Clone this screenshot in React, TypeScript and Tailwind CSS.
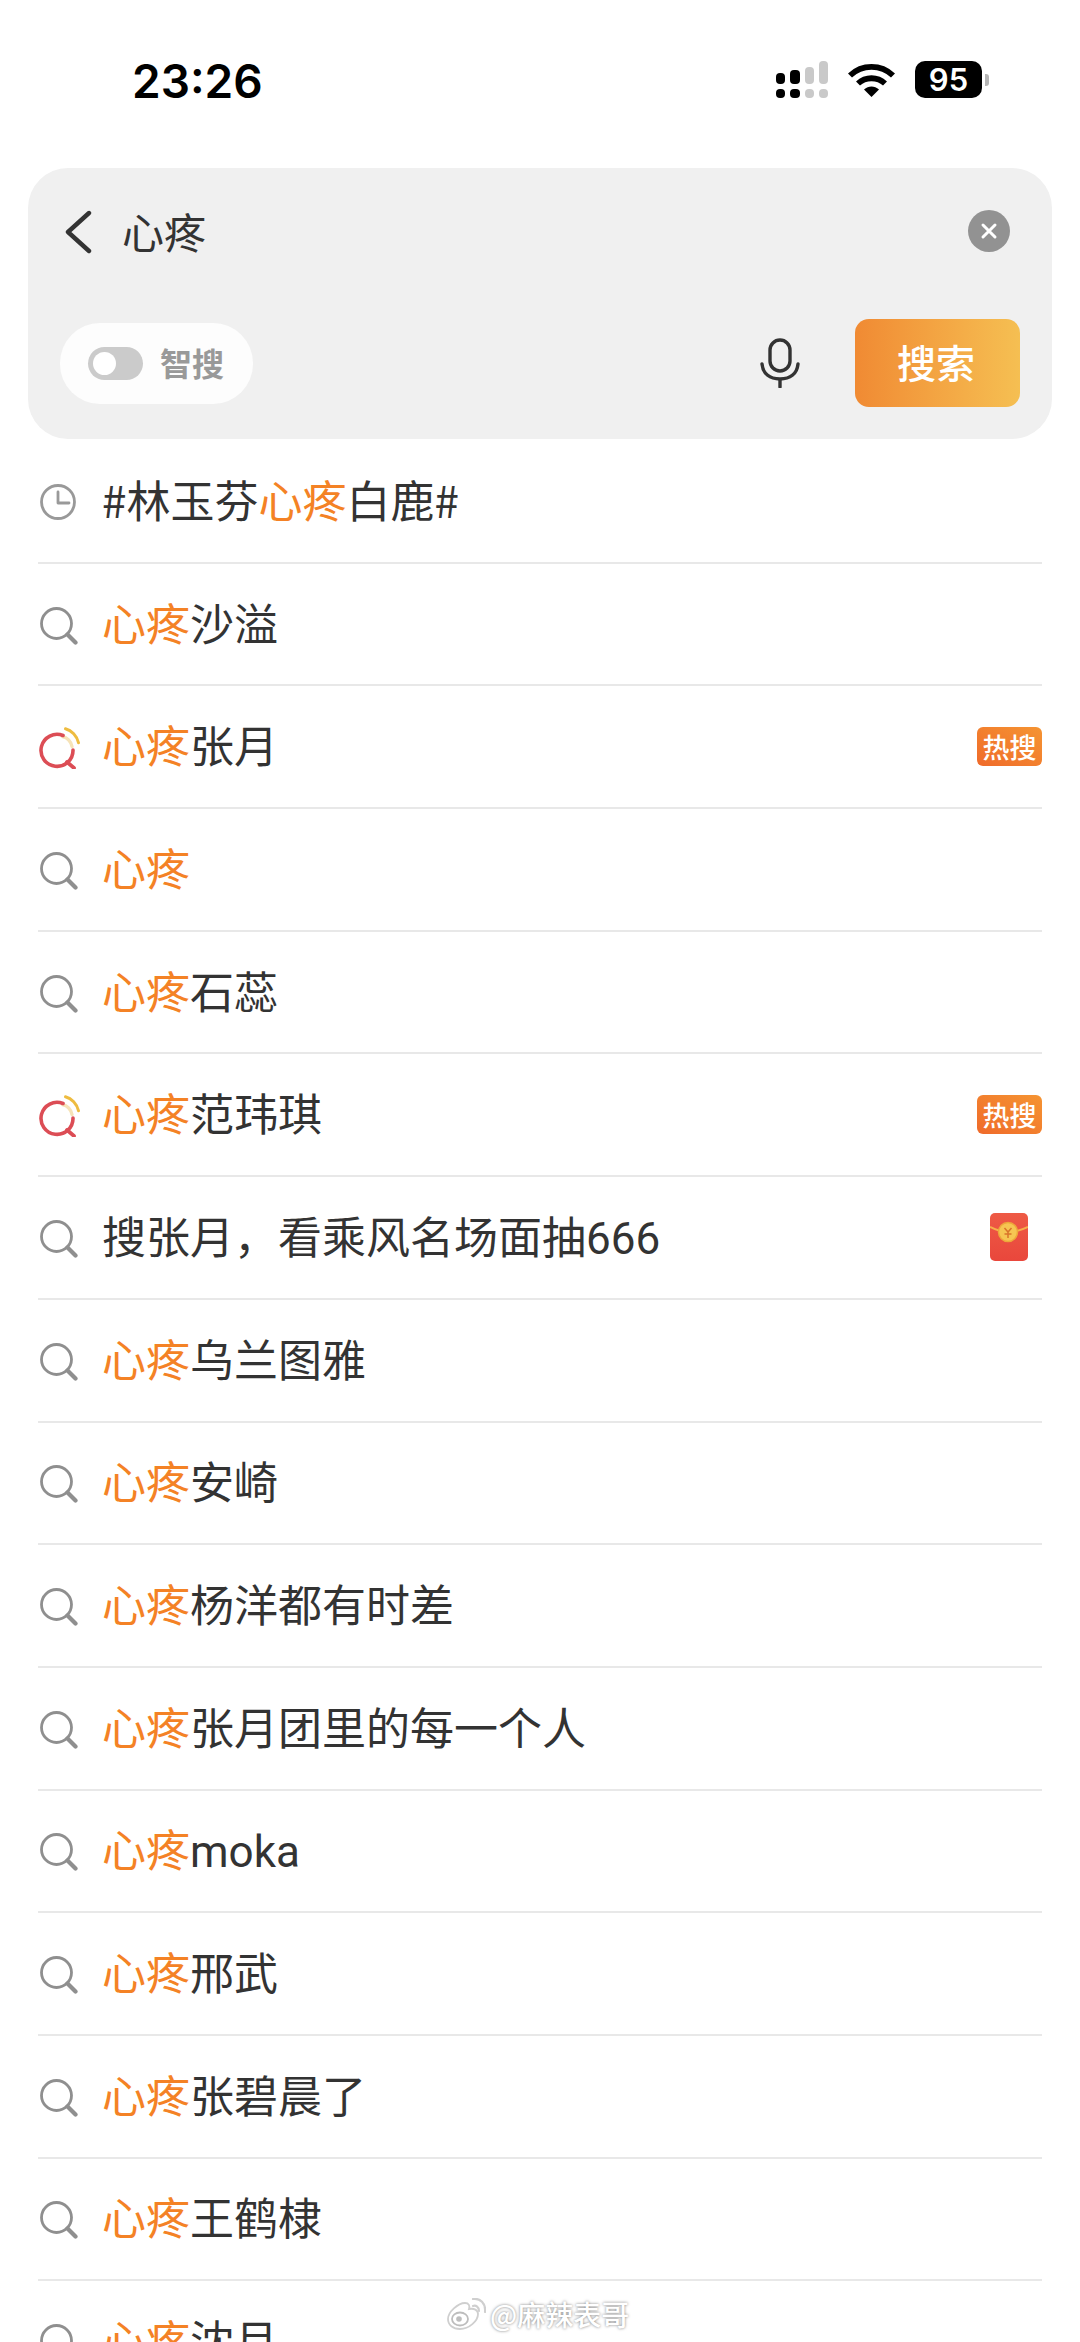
const ROBOTO = "font-['Roboto','Noto_Sans_CJK_SC','Noto_Sans',sans-serif]"
const NOTO = "font-['Noto_Sans_CJK_SC','Noto_Sans',sans-serif]"

type Row = { pre?: string; hit?: string; post: string; icon?: 'search' | 'clock' | 'hot'; tag?: 'hot' | 'packet' }

const rows: Row[] = [
  { pre: '#林玉芬', hit: '心疼', post: '白鹿#', icon: 'clock' },
  { hit: '心疼', post: '沙溢' },
  { hit: '心疼', post: '张月', icon: 'hot', tag: 'hot' },
  { hit: '心疼', post: '' },
  { hit: '心疼', post: '石蕊' },
  { hit: '心疼', post: '范玮琪', icon: 'hot', tag: 'hot' },
  { post: '搜张月，看乘风名场面抽666', tag: 'packet' },
  { hit: '心疼', post: '乌兰图雅' },
  { hit: '心疼', post: '安崎' },
  { hit: '心疼', post: '杨洋都有时差' },
  { hit: '心疼', post: '张月团里的每一个人' },
  { hit: '心疼', post: 'moka' },
  { hit: '心疼', post: '邢武' },
  { hit: '心疼', post: '张碧晨了' },
  { hit: '心疼', post: '王鹤棣' },
  { hit: '心疼', post: '沈月' },
]

function SearchIcon() {
  return (
    <svg width="38" height="38" viewBox="0 0 38 38" fill="none" stroke="#8f8f8f">
      <circle cx="16.5" cy="16.5" r="15" strokeWidth="2.8" />
      <path d="M27.5 27.5l8 8" strokeWidth="4.2" strokeLinecap="round" />
    </svg>
  )
}

function ClockIcon() {
  return (
    <svg width="38" height="38" viewBox="0 0 38 38" fill="none" stroke="#999999" strokeWidth="2.8">
      <circle cx="18" cy="18" r="16.5" />
      <path d="M18 8v11h11" strokeLinecap="round" strokeLinejoin="round" />
    </svg>
  )
}

function HotIcon() {
  return (
    <svg width="42" height="42" viewBox="0 0 42 42" fill="none">
      <path d="M23.5 9.5c4.5 1 8.5 5 9.5 10" stroke="#f6e3b8" strokeWidth="3.4" strokeLinecap="round" />
      <path d="M24 8.500A16 16 0 1 0 34 23" stroke="#dc4d55" strokeWidth="3.6" strokeLinecap="round" />
      <path d="M28 35l7 6" stroke="#dc4d55" strokeWidth="3.8" strokeLinecap="round" />
      <path d="M26.5 1.8c6 1.5 11.5 7 13 14" stroke="#eebc40" strokeWidth="3" strokeLinecap="round" />
    </svg>
  )
}

function RedPacket() {
  return (
    <svg width="38" height="48" viewBox="0 0 38 48">
      <defs>
        <linearGradient id="packet" x1="0" y1="0" x2="0" y2="1">
          <stop offset="0" stopColor="#ee5a45" />
          <stop offset="1" stopColor="#e9473c" />
        </linearGradient>
      </defs>
      <rect x="0" y="0" width="38" height="48" rx="5" fill="url(#packet)" />
      <path d="M0 14c6 3 11 5 18 5s14-2 20-5" fill="none" stroke="#f5b04a" strokeWidth="2" />
      <circle cx="18" cy="19" r="9.5" fill="#f6c552" stroke="#eda83a" strokeWidth="1.5" />
      <path d="M14.5 15l3.5 4 3.5-4M18 19v6M14.5 21h7" fill="none" stroke="#d9742a" strokeWidth="1.5" />
    </svg>
  )
}

function HotTag() {
  return (
    <span className={`${NOTO} flex h-[39px] w-[65px] items-center justify-center rounded-[6px] bg-gradient-to-tr from-[#ef6a2a] to-[#f59432] text-[27px] font-medium leading-none text-white`}>
      热搜
    </span>
  )
}

function Signal() {
  return (
    <div className="grid grid-cols-[9px_10px_9px_9px] items-end gap-x-[5px] gap-y-[5px]">
      <span className="h-[11px] rounded-[4px] bg-black" />
      <span className="h-[14px] rounded-[4px] bg-black" />
      <span className="h-[17px] rounded-[4px] bg-[#c9c9c9]" />
      <span className="h-[23px] rounded-[4px] bg-[#c9c9c9]" />
      <span className="h-[9px] rounded-[4px] bg-black" />
      <span className="h-[9px] rounded-[4px] bg-black" />
      <span className="h-[9px] rounded-[4px] bg-[#c9c9c9]" />
      <span className="h-[9px] rounded-[4px] bg-[#c9c9c9]" />
    </div>
  )
}

function Wifi() {
  return (
    <svg width="47" height="34" viewBox="0 0 47 34" fill="none" stroke="#000">
      <path d="M2 12.5C14 1 33 1 45 12.5" strokeWidth="5.8" />
      <path d="M10 20.5C17.5 13.5 29.5 13.5 37 20.5" strokeWidth="5.8" />
      <path d="M16 26.5L23.5 34L31 26.5C26.5 22.5 20.5 22.5 16 26.5Z" fill="#000" stroke="none" />
    </svg>
  )
}

function Battery() {
  return (
    <div className="flex items-center">
      <div className="flex h-[37px] w-[67px] items-center justify-center rounded-[10px] bg-black font-['Inter',sans-serif] text-[31px] font-semibold leading-none text-white">
        95
      </div>
      <span className="ml-[3px] h-[12px] w-[4px] rounded-r-[3px] bg-[#b5b5b5]" />
    </div>
  )
}

function WeiboLogo() {
  return (
    <svg width="40" height="32" viewBox="0 0 40 32" fill="none">
      <path d="M2 21C2 14 12 5 19 5c4 0 5 3 4 6 5-1 9 1 9 5 0 7-9 15-18 15C7 31 2 27 2 21Z" fill="#fff" stroke="#cfcfcf" strokeWidth="1.8" />
      <ellipse cx="14" cy="21" rx="8" ry="6.5" stroke="#bdbdbd" strokeWidth="1.8" />
      <circle cx="13" cy="21" r="2.8" fill="#bdbdbd" />
      <path d="M27 8c3-1 6 1 6 5M27 1c7-1 13 4 12 13" stroke="#cfcfcf" strokeWidth="2.2" strokeLinecap="round" />
    </svg>
  )
}

export default function App() {
  return (
    <div className={`${NOTO} relative h-[2342px] w-[1080px] overflow-hidden bg-white`}>
      {/* status bar */}
      <div className="flex h-[168px] items-start justify-between pl-[132px] pr-[91px] pt-[54px]">
        <span className="font-['Inter',sans-serif] text-[46px] font-semibold leading-[54px] text-black">23:26</span>
        <div className="flex items-center gap-[20px] pt-[7px]">
          <Signal />
          <Wifi />
          <Battery />
        </div>
      </div>

      {/* search card */}
      <div className="mx-[28px] flex h-[271px] flex-col rounded-[40px] bg-[#f0f0f0]">
        <div className="flex items-center pl-[36px] pr-[42px] pt-[42px]">
          <svg width="28" height="44" viewBox="0 0 28 44" fill="none" stroke="#333" strokeWidth="4.4" strokeLinecap="round" strokeLinejoin="round">
            <path d="M25 3L4 22l21 19" />
          </svg>
          <span className="ml-[30px] -mt-[3px] text-[42px] leading-[44px] text-[#333]">心疼</span>
          <span className="ml-auto -mt-[2px] flex h-[42px] w-[42px] items-center justify-center rounded-full bg-[#929292]">
            <svg width="18" height="18" viewBox="0 0 18 18" stroke="#fff" strokeWidth="3" strokeLinecap="round">
              <path d="M3 3l12 12M15 3L3 15" />
            </svg>
          </span>
        </div>
        <div className="mt-auto flex items-center pb-[32px] pl-[32px] pr-[32px]">
          <div className="flex h-[81px] w-[193px] items-center rounded-[40px] bg-[#fdfdfd] pl-[28px]">
            <span className="flex h-[33px] w-[55px] items-center rounded-full bg-[#cbcbcb] pl-[5px]">
              <span className="h-[23px] w-[23px] rounded-full bg-white" />
            </span>
            <span className="ml-[17px] -mt-[3px] text-[32px] font-semibold leading-none text-[#999]">智搜</span>
          </div>
          <svg className="ml-auto" width="40" height="50" viewBox="0 0 40 50" fill="none" stroke="#333" strokeLinecap="round">
            <rect x="10" y="2" width="20" height="31" rx="10" strokeWidth="3.4" />
            <path d="M2 26c1 10 8 15 18 15s17-5 18-15" strokeWidth="3.4" />
            <path d="M20 42v7" strokeWidth="3.4" />
          </svg>
          <button className="ml-[55px] flex h-[88px] w-[165px] items-center justify-center rounded-[14px] bg-gradient-to-r from-[#f08a33] to-[#f5bf52] pb-[3px] pr-[3px] text-[39px] font-medium leading-none text-white">
            搜索
          </button>
        </div>
      </div>

      {/* suggestion rows */}
      <div className="mt-[2px] px-[38px]">
        {rows.map((r, i) => (
          <div key={i} className="flex h-[122.7px] items-center border-b-2 border-[#e8e8e8]">
            <span className="flex w-[64px] shrink-0 items-center pl-[2px] pt-[3px]">
              {r.icon === 'clock' ? <ClockIcon /> : r.icon === 'hot' ? <span className="-ml-[1px]"><HotIcon /></span> : <SearchIcon />}
            </span>
            {/* the # in the first row is narrower in the CJK font */}
            <span className={r.pre ? `${NOTO} pb-[5px] text-[44px] leading-[60px] text-[#333]` : `${ROBOTO} pt-[3px] text-[44px] leading-[60px] text-[#333]`}>
              {r.pre}
              {r.hit && <span className="text-[#f48225]">{r.hit}</span>}
              {r.post}
            </span>
            {r.tag === 'hot' && <span className="ml-auto"><HotTag /></span>}
            {r.tag === 'packet' && <span className="ml-auto mr-[14px]"><RedPacket /></span>}
          </div>
        ))}
      </div>

      {/* watermark */}
      <div className="absolute left-[446px] top-[2298px] flex items-center gap-[4px]">
        <WeiboLogo />
        <span className="text-[28px] font-medium leading-[32px] text-white [text-shadow:0_0_3px_#7a7a7a]">@麻辣表哥</span>
      </div>
    </div>
  )
}
